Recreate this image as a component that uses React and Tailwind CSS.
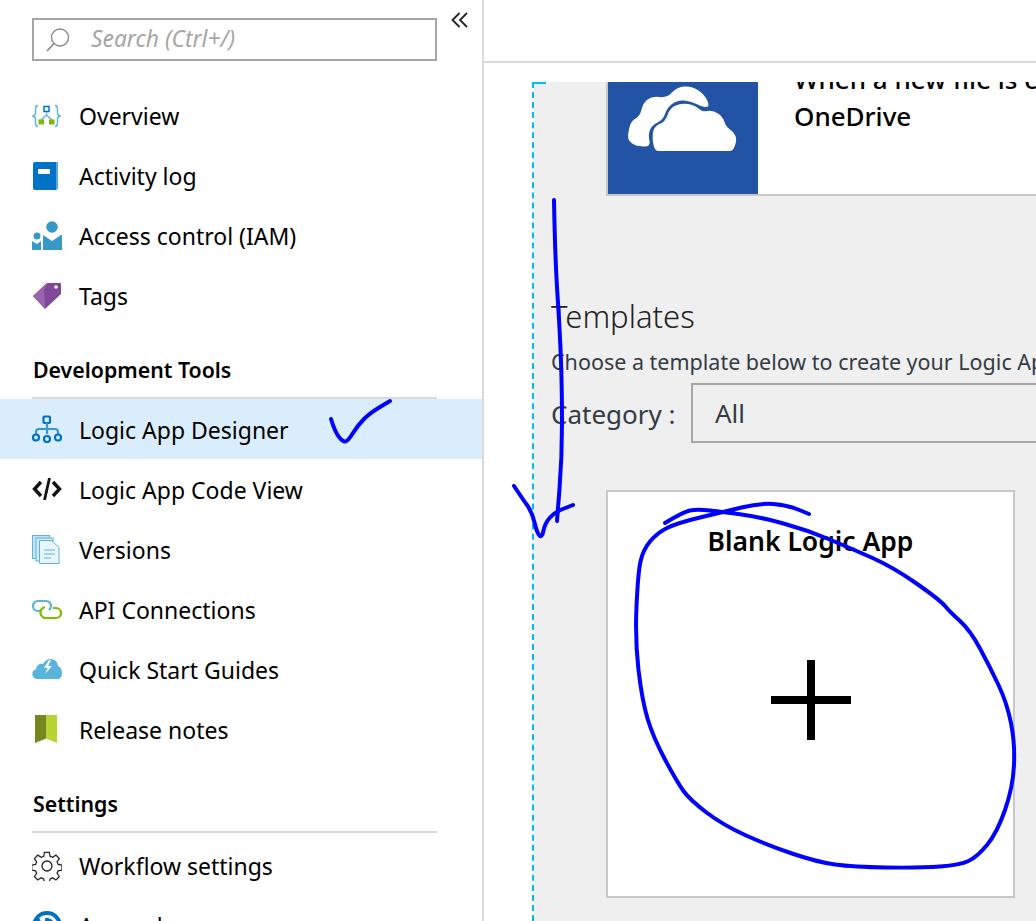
import React from 'react';

const font = "font-['Noto_Sans','Open_Sans',sans-serif]";

// turns a list of points into a smooth path, used for the pen marks and the cloud
function smooth(points, closed) {
  const mid = (a, b) => [(a[0] + b[0]) / 2, (a[1] + b[1]) / 2];
  if (closed) {
    const start = mid(points[points.length - 1], points[0]);
    let d = `M${start[0]} ${start[1]}`;
    points.forEach((p, i) => {
      const m = mid(p, points[(i + 1) % points.length]);
      d += `Q${p[0]} ${p[1]} ${m[0]} ${m[1]}`;
    });
    return d + 'Z';
  }
  let d = `M${points[0][0]} ${points[0][1]}`;
  for (let i = 1; i < points.length - 1; i++) {
    const m = mid(points[i], points[i + 1]);
    d += `Q${points[i][0]} ${points[i][1]} ${m[0]} ${m[1]}`;
  }
  const last = points[points.length - 1];
  return d + `L${last[0]} ${last[1]}`;
}

function SearchIcon() {
  return (
    <svg width="24" height="24" viewBox="0 0 24 24" fill="none" stroke="#8a8a8a" strokeWidth="1.4">
      <circle cx="14" cy="9.500" r="8.500" />
      <path d="M8 15.500 1 23" strokeWidth="1.800" />
    </svg>
  );
}

function OverviewIcon() {
  return (
    <svg width="29" height="24" viewBox="0 0 29 24" fill="none">
      <path d="M6 1.500C3.500 1.500 3.500 3 3.500 5v4c0 1.500-.8 2.500-2.500 3 1.700.5 2.500 1.500 2.500 3v4c0 2 0 3.500 2.500 3.500M23 1.500c2.500 0 2.500 1.500 2.500 3.500v4c0 1.500.8 2.500 2.500 3-1.700.5-2.500 1.500-2.500 3v4c0 2 0 3.500-2.500 3.500" stroke="#59b4d9" strokeWidth="1.400" />
      <rect x="12" y="2.500" width="5" height="5" stroke="#0072c6" strokeWidth="1.500" />
      <path d="M14.500 8v3M14.500 11 9 16M14.500 11 20 16" stroke="#59b4d9" strokeWidth="1.200" />
      <rect x="6.500" y="15.500" width="5.500" height="5" fill="#7fba00" />
      <rect x="17" y="15.500" width="5.500" height="5" fill="#7fba00" />
    </svg>
  );
}

function BookIcon() {
  return (
    <svg width="26" height="28" viewBox="0 0 26 28">
      <path d="M1 2a2 2 0 0 1 2-2h23v26l-2 2H3a2 2 0 0 1-2-2z" fill="#0072c6" />
      <path d="M24 0h2v26l-2 2z" fill="#59a5dc" />
      <rect x="6" y="7" width="12" height="5" rx="1" fill="#fff" />
    </svg>
  );
}

function AccessIcon() {
  return (
    <svg width="30" height="30" viewBox="0 0 30 30" fill="#3999c6">
      <circle cx="20" cy="6" r="5.800" />
      <path d="M11 14l9 6 9-6h1v15H11z" />
      <circle cx="5" cy="15" r="3.500" />
      <path d="M0 20l5 3 4-3v9H0z" />
    </svg>
  );
}

function TagIcon() {
  return (
    <svg width="30" height="28" viewBox="0 0 30 28">
      <path d="M1 14 15 1h13a1 1 0 0 1 1 1v10L13 27z" fill="#804998" />
      <path d="M1 14 15 1l1 0-4 7 1 19z" fill="#9964ad" />
      <circle cx="24" cy="5" r="1.800" fill="#fff" />
    </svg>
  );
}

function DesignerIcon() {
  return (
    <svg width="30" height="28" viewBox="0 0 30 28" fill="none" stroke="#0072c6" strokeWidth="2.200">
      <rect x="11.500" y="1.500" width="6.500" height="6.500" rx="1" />
      <path d="M15 8v6M4 19v-2c0-2 1-3 3-3h16c2 0 3 1 3 3v2M15 14v5" stroke="#3999c6" />
      <circle cx="4" cy="22.500" r="3" />
      <circle cx="15" cy="24" r="3" />
      <circle cx="26" cy="22.500" r="3" />
    </svg>
  );
}

function CodeIcon() {
  return (
    <svg width="30" height="22" viewBox="0 0 30 22" fill="none" stroke="#111" strokeWidth="3.400">
      <path d="M9 4 2.500 11 9 18M21 4l6.500 7L21 18" />
      <path d="M17.500 0 12.500 22" strokeWidth="2.800" />
    </svg>
  );
}

function VersionsIcon() {
  return (
    <svg width="28" height="29" viewBox="0 0 28 29" stroke="#59b4d9" strokeWidth="1">
      <rect x="0.500" y="0.500" width="17" height="23" fill="#c5e4f3" />
      <rect x="4" y="3" width="17" height="23" fill="#d5ecf7" />
      <path d="M7.500 5.500h12l7.500 7v16h-19.500z" fill="#e8f5fb" />
      <path d="M12 15h11M12 19h11M12 23h7" stroke="#59b4d9" />
    </svg>
  );
}

function ApiIcon() {
  return (
    <svg width="30" height="22" viewBox="0 0 30 22" fill="none" strokeWidth="2.200">
      <path d="M17 12a5 5 0 0 0-3-9H6a4.800 4.800 0 0 0 0 10h3" stroke="#59b4d9" />
      <path d="M13 9a5 5 0 0 0 2 11h9a5 5 0 0 0 0-10h-3" stroke="#7fba00" />
    </svg>
  );
}

function CloudBoltIcon() {
  return (
    <svg width="30" height="20" viewBox="0 0 30 20">
      <path d="M5 20a5 5 0 0 1-1-9.800C4.500 6 8 4 11 5c1.500-3 4-5 8-5 4 0 6.500 3 7 7 2.500 1 4 3 4 7 0 4-2 6-5 6z" fill="#59b4d9" />
      <path d="M17 1l-5 8h3.500L13 15l7-8h-4l3-6z" fill="#fff" />
    </svg>
  );
}

function BookmarkIcon() {
  return (
    <svg className="ml-[3px]" width="23" height="28" viewBox="0 0 23 28">
      <path d="M0 0h11v23.500L0 28z" fill="#76871f" />
      <path d="M11 0h11v28l-11-4.500z" fill="#b8d432" />
    </svg>
  );
}

function GearIcon() {
  return (
    <svg width="30" height="30" viewBox="0 0 30 30" fill="none" stroke="#222" strokeWidth="1.300">
      <circle cx="15" cy="15" r="5" />
      <path d="M12.500 1h5l.8 4 2.600 1.100 3.500-2.300 3.500 3.500-2.300 3.500 1.100 2.700 4 .8v5l-4 .8-1.100 2.600 2.300 3.500-3.500 3.500-3.500-2.300-2.600 1.100-.8 4h-5l-.8-4-2.700-1.100-3.500 2.300-3.500-3.500 2.300-3.500-1.100-2.600-4-.8v-5l4-.8 1.100-2.700-2.300-3.500 3.500-3.500 3.500 2.300 2.700-1.100z" transform="translate(.5 .5) scale(.96)" />
    </svg>
  );
}

function KeysIcon() {
  return (
    <svg width="30" height="30" viewBox="0 0 30 30">
      <circle cx="15" cy="15" r="15" fill="#0072c6" />
      <path d="M8 8a10 10 0 0 1 15 2l-3 3M8 8l5 1" fill="none" stroke="#fff" strokeWidth="3" />
    </svg>
  );
}

const backCloud = [[1, 47], [4, 35], [13, 30], [16, 17], [25, 10], [40, 12], [50, 1], [65, 0], [78, 9], [83, 21], [75, 21], [64, 15], [50, 14], [40, 22], [36, 34], [25, 39], [21, 49], [24, 61], [8, 60], [1, 54]];
const frontCloud = [[27, 65], [25, 47], [29, 39], [38, 36], [43, 22], [54, 17], [68, 19], [75, 26], [86, 24], [96, 31], [99, 41], [107, 46], [110, 54], [106, 65], [100, 65], [36, 65]];

function OneDriveCloud() {
  return (
    <svg className="-mt-[22px]" width="112" height="66" viewBox="0 0 112 66" fill="#fff">
      <path d={smooth(backCloud, true)} />
      <path d={smooth(frontCloud, true)} />
    </svg>
  );
}

function NavItem({ icon, label, active, low }) {
  return (
    <div className={`h-[60px] flex items-center pl-8 ${active ? 'bg-[#d9edfc]' : ''}`}>
      <div className="w-[47px] flex items-center shrink-0">{icon}</div>
      <span className={`text-[23px] text-black whitespace-nowrap ${low ? 'pt-[3px]' : ''}`}>{label}</span>
    </div>
  );
}

function SectionTitle({ title }) {
  return (
    <div className="ml-8 w-[405px] border-b-2 border-[#d9d9d9] pl-px font-semibold text-[21.300px] text-black h-[44px] leading-[30px]">
      {title}
    </div>
  );
}

const checkMark = [[331, 419], [335, 432], [343, 442], [348, 441], [358, 425], [370, 413], [390, 401]];
const arrowShaft = [[554, 200], [555, 257], [560, 333], [562, 390], [562, 457], [557, 521]];
const arrowHead = [[514, 486], [522, 498], [532, 512], [537, 533], [542, 538], [545, 523], [555, 512], [573, 505]];
const circleMark = [[665, 523], [683, 512], [697, 509], [723, 512], [760, 517], [807, 530], [850, 548], [893, 567], [940, 600], [950, 612], [970, 630], [990, 667], [1007, 703], [1015, 743], [1013, 787], [997, 833], [977, 857], [960, 865], [920, 868], [853, 867], [817, 862], [767, 845], [723, 825], [690, 800], [677, 782], [653, 737], [642, 700], [635, 640], [638, 573], [643, 550], [657, 533], [677, 523], [723, 512], [760, 503], [787, 505], [809, 514]];

// pen marks drawn on top of the screenshot
function Annotations() {
  return (
    <svg className="absolute inset-0 pointer-events-none" width="1036" height="921" viewBox="0 0 1036 921" fill="none" stroke="#0000ff" strokeWidth="4" strokeLinecap="round" strokeLinejoin="round">
      <path d={smooth(checkMark)} />
      <path d={smooth(arrowShaft)} />
      <path d={smooth(arrowHead)} />
      <path d={smooth(circleMark)} />
    </svg>
  );
}

export default function App() {
  return (
    <div className={`relative w-[1036px] h-[921px] overflow-hidden bg-white flex ${font}`}>
      <aside className="w-[484px] shrink-0 h-full border-r-2 border-[#d9d9d9] overflow-hidden">
        <div className="flex items-start pt-[18px]">
          <div className="ml-8 w-[405px] h-[43px] border-2 border-[#a6a6a6] flex items-center pl-[12px] gap-[21px]">
            <SearchIcon />
            <span className="italic text-[22.800px] text-[#a6a6a6]">Search (Ctrl+/)</span>
          </div>
          <svg className="ml-[14px] -mt-[6px]" width="18" height="16" viewBox="0 0 18 16" fill="none" stroke="#222" strokeWidth="1.800">
            <path d="M8.500 1 1.500 8l7 7M16 1 9 8l7 7" />
          </svg>
        </div>
        <div className="pt-[25px]">
          <NavItem icon={<OverviewIcon />} label="Overview" />
          <NavItem icon={<BookIcon />} label="Activity log" />
          <NavItem icon={<AccessIcon />} label="Access control (IAM)" />
          <NavItem icon={<TagIcon />} label="Tags" />
        </div>
        <div className="pt-[29px]"><SectionTitle title="Development Tools" /></div>
        <NavItem low active icon={<DesignerIcon />} label="Logic App Designer" />
        <NavItem low icon={<CodeIcon />} label="Logic App Code View" />
        <NavItem low icon={<VersionsIcon />} label="Versions" />
        <NavItem low icon={<ApiIcon />} label="API Connections" />
        <NavItem low icon={<CloudBoltIcon />} label="Quick Start Guides" />
        <NavItem low icon={<BookmarkIcon />} label="Release notes" />
        <div className="pt-[30px] pb-[3px]"><SectionTitle title="Settings" /></div>
        <NavItem icon={<GearIcon />} label="Workflow settings" />
        <NavItem icon={<KeysIcon />} label="Access keys" />
      </aside>

      <main className="flex-1 min-w-0 h-full flex flex-col">
        <div className="h-[63px] border-b-2 border-[#d9d9d9] shrink-0" />
        <div className="h-[19px] shrink-0" />
        <div className="relative flex-1 ml-[48px] border-l-2 border-dashed border-[#00bcf2] min-h-0 overflow-hidden">
          <div className="absolute top-0 left-0 w-[12px] border-t-2 border-dashed border-[#00bcf2]" />
          <div className="h-full bg-[#efefef] overflow-hidden">
            <div className="-mt-[16px] ml-[72px] w-[600px] h-[130px] bg-white border-l-2 border-b-2 border-[#c8c8c8] flex">
              <div className="w-[150px] h-full bg-[#2353a4] flex items-center justify-center"><OneDriveCloud /></div>
              <div className="pl-[36px] text-[26px] font-medium text-black leading-[37px] whitespace-nowrap">
                <div className="-mt-[5px]">When a new file is created</div>
                <div>OneDrive</div>
              </div>
            </div>
            <div className="pl-[17px] pt-[98px]">
              <div className="text-[31px] font-light text-[#222] leading-[44px]">Templates</div>
              <div className="text-[21.500px] text-[#333b44] leading-[30px] mt-[9px] whitespace-nowrap">Choose a template below to create your Logic App</div>
              <div className="flex items-center mt-[6px] h-[60px] whitespace-nowrap">
                <span className="text-[26px] text-[#333b44] w-[140px] shrink-0 pt-[3px]">Category :</span>
                <div className="w-[600px] shrink-0 h-[60px] border-2 border-[#a6a6a6] flex items-center pl-[22px] text-[26px] text-[#333b44]">All</div>
              </div>
            </div>
            <div className="ml-[72px] mt-[47px] w-[409px] h-[408px] bg-white border-2 border-[#c8c8c8] flex flex-col items-center">
              <div className="text-[26.500px] font-semibold text-black mt-[31px] leading-[36px]">Blank Logic App</div>
              <svg className="mt-[101px]" width="80" height="80" viewBox="0 0 80 80" fill="#000">
                <rect x="36" y="0" width="8" height="80" />
                <rect x="0" y="36" width="80" height="8" />
              </svg>
            </div>
          </div>
        </div>
      </main>
      <Annotations />
    </div>
  );
}
